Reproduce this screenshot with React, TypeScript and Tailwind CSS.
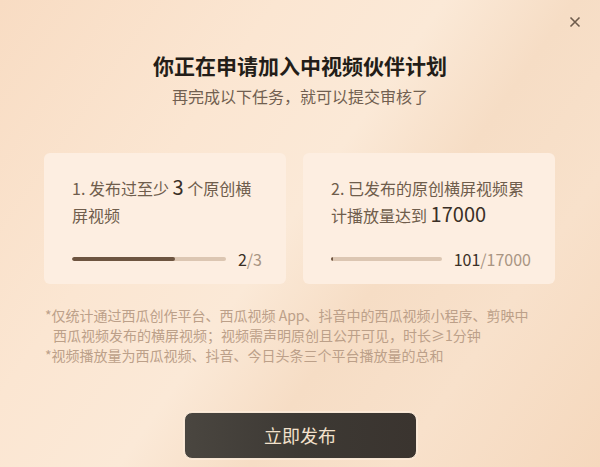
import React from 'react';

type Task = {
  id: number;
  label: React.ReactNode;
  done: number;
  total: number;
  width: string;
};

const tasks: Task[] = [
  {
    id: 1,
    label: (
      <>
        1. 发布过至少 <span className="text-[20px] leading-[20px] text-[#3a2f26]">3</span> 个原创横屏视频
      </>
    ),
    done: 2,
    total: 3,
    width: 'w-[242px] shrink-0',
  },
  {
    id: 2,
    label: (
      <>
        2. 已发布的原创横屏视频累计播放量达到 <span className="text-[20px] leading-[20px] text-[#3a2f26]">17000</span>
      </>
    ),
    done: 101,
    total: 17000,
    width: 'flex-1',
  },
];

function TaskCard({ task }: { task: Task }) {
  const pct = Math.max((task.done / task.total) * 100, 1.5);
  return (
    <div className={`${task.width} h-[131px] rounded-md bg-[#fdeee1] pl-7 pr-6 pt-[22px] flex flex-col`}>
      <p className="text-[16px] leading-[27px] text-[#6f5d4c]">{task.label}</p>
      <div className="mt-auto mb-[17px] flex items-center gap-3">
        <div className="flex-1 h-[4px] rounded-full bg-[#dcc6b2] overflow-hidden">
          <div className="h-full rounded-full bg-[#6d5440]" style={{ width: `${pct}%` }} />
        </div>
        <span className="text-[16px] leading-none text-[#a99583]">
          <span className="text-[#3a2f26]">{task.done}</span>/{task.total}
        </span>
      </div>
    </div>
  );
}

export default function App() {
  return (
    <div
      className="relative w-[600px] h-[467px] overflow-hidden bg-[linear-gradient(125deg,#f8dcc3_0%,#fbe6d2_30%,#fbe9d7_48%,#f6ddc5_62%,#f8e1cb_78%,#f5d8bd_100%)] font-['Noto_Sans_CJK_SC','Noto_Sans',sans-serif]"
    >
      <button className="absolute right-[19px] top-[16px] w-[12px] h-[12px] text-[#6e5c4d]" aria-label="关闭">
        <svg viewBox="0 0 12 12" className="w-full h-full" fill="none" stroke="currentColor" strokeWidth="1.6">
          <path d="M1.5 1.5l9 9M10.5 1.5l-9 9" />
        </svg>
      </button>

      <div className="flex flex-col items-center pt-[51px]">
        <h1 className="text-[21px] leading-[28px] font-bold text-[#231d18]">你正在申请加入中视频伙伴计划</h1>
        <p className="mt-[6px] text-[16px] leading-[22px] text-[#715f50]">再完成以下任务，就可以提交审核了</p>
      </div>

      <div className="flex gap-[17px] pl-[44px] pr-[45px] pt-[46px]">
        {tasks.map(t => (
          <TaskCard key={t.id} task={t} />
        ))}
      </div>

      <div className="px-[45px] pt-[21px] text-[14px] leading-[20px] text-[#bca089]">
        <p>*仅统计通过西瓜创作平台、西瓜视频 App、抖音中的西瓜视频小程序、剪映中</p>
        <p className="pl-[8px]">西瓜视频发布的横屏视频；视频需声明原创且公开可见，时长≥1分钟</p>
        <p>*视频播放量为西瓜视频、抖音、今日头条三个平台播放量的总和</p>
      </div>

      <div className="flex justify-center pt-[47px]">
        <button className="w-[233px] h-[47px] rounded-lg border border-[#f7e6d4] bg-[linear-gradient(90deg,#4a4640_0%,#3d3934_50%,#3a342f_100%)] text-[18px] text-[#f3e1cc] shadow-[0_0_0_1px_rgba(255,240,225,0.6)]">
          立即发布
        </button>
      </div>
    </div>
  );
}
